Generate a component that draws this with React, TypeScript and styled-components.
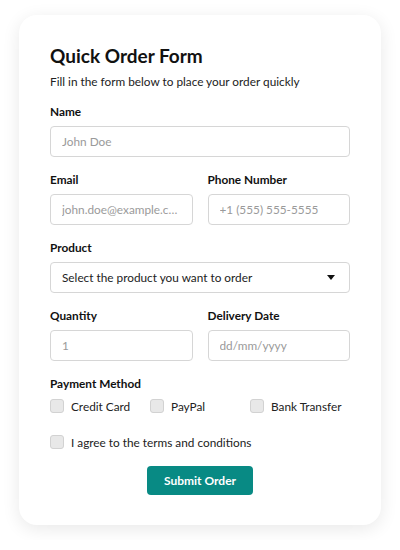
import React from "react";
import styled, { createGlobalStyle } from "styled-components";

const Global = createGlobalStyle`
  html, body { margin: 0; padding: 0; background: #ffffff; }
  body { font-family: Lato, "Noto Sans", sans-serif; color: #111; }
  * { box-sizing: border-box; }
`;

const Page = styled.div`
  padding: 15px 19px;
  width: 400px;
`;

const Card = styled.form`
  background: #fff;
  border-radius: 18px;
  box-shadow: 0 4px 18px rgba(0, 0, 0, 0.09);
  padding: 29px 31px 30px;
  display: flex;
  flex-direction: column;
`;

const Title = styled.h1`
  margin: 0;
  font-size: 19px;
  line-height: 24px;
  font-weight: 700;
  color: #111;
`;

const Subtitle = styled.p`
  margin: 5px 0 12px;
  font-size: 11.8px;
  line-height: 18px;
  color: #222;
`;

const Fields = styled.div`
  display: flex;
  flex-direction: column;
  gap: 14px;
`;

const Row = styled.div`
  display: grid;
  grid-template-columns: 1fr 1fr;
  gap: 15px;
`;

const Field = styled.div`
  display: flex;
  flex-direction: column;
  min-width: 0;
`;

const Label = styled.label`
  font-size: 11.8px;
  line-height: 18px;
  font-weight: 700;
  color: #111;
  margin-bottom: 5px;
`;

const Input = styled.input`
  height: 31px;
  width: 100%;
  border: 1px solid #d6d6d6;
  border-radius: 4px;
  padding: 0 11px;
  font-family: inherit;
  font-size: 11.8px;
  color: #333;
  background: #fff;
  outline: none;
  text-overflow: ellipsis;
  &::placeholder { color: #9a9a9a; }
`;

const SelectBox = styled.div`
  height: 31px;
  border: 1px solid #d6d6d6;
  border-radius: 4px;
  padding: 0 14px 0 11px;
  display: flex;
  align-items: center;
  justify-content: space-between;
  font-size: 11.8px;
  color: #222;
`;

const Arrow = styled.span`
  width: 0;
  height: 0;
  border-left: 4px solid transparent;
  border-right: 4px solid transparent;
  border-top: 5px solid #111;
`;

const Section = styled.div`
  display: flex;
  flex-direction: column;
  margin-top: 14px;
`;

const Options = styled.div`
  display: grid;
  grid-template-columns: repeat(3, 1fr);
  margin-top: -1px;
`;

const Check = styled.label`
  display: flex;
  align-items: center;
  gap: 7px;
  height: 18px;
  font-size: 11.8px;
  color: #222;
  white-space: nowrap;
`;

const Box = styled.span`
  width: 14px;
  height: 14px;
  border-radius: 3px;
  background: #e8e8e8;
  border: 1px solid #d2d2d2;
  flex-shrink: 0;
`;

const Terms = styled(Check)`
  margin-top: 18px;
`;

const Submit = styled.button`
  align-self: center;
  margin-top: 15px;
  height: 29px;
  width: 106px;
  border: none;
  border-radius: 4px;
  background: #088a84;
  color: #fff;
  font-family: inherit;
  font-size: 12px;
  font-weight: 700;
`;

export default function App() {
  return (
    <>
      <Global />
      <Page>
        <Card onSubmit={(e) => e.preventDefault()}>
          <Title>Quick Order Form</Title>
          <Subtitle>Fill in the form below to place your order quickly</Subtitle>
          <Fields>
            <Field>
              <Label>Name</Label>
              <Input placeholder="John Doe" />
            </Field>
            <Row>
              <Field>
                <Label>Email</Label>
                <Input placeholder="john.doe@example.com" />
              </Field>
              <Field>
                <Label>Phone Number</Label>
                <Input placeholder="+1 (555) 555-5555" />
              </Field>
            </Row>
            <Field>
              <Label>Product</Label>
              <SelectBox>
                <span>Select the product you want to order</span>
                <Arrow />
              </SelectBox>
            </Field>
            <Row>
              <Field>
                <Label>Quantity</Label>
                <Input placeholder="1" />
              </Field>
              <Field>
                <Label>Delivery Date</Label>
                <Input placeholder="dd/mm/yyyy" />
              </Field>
            </Row>
          </Fields>
          <Section>
            <Label as="span">Payment Method</Label>
            <Options>
              <Check><Box />Credit Card</Check>
              <Check><Box />PayPal</Check>
              <Check><Box />Bank Transfer</Check>
            </Options>
          </Section>
          <Terms><Box />I agree to the terms and conditions</Terms>
          <Submit type="submit">Submit Order</Submit>
        </Card>
      </Page>
    </>
  );
}
